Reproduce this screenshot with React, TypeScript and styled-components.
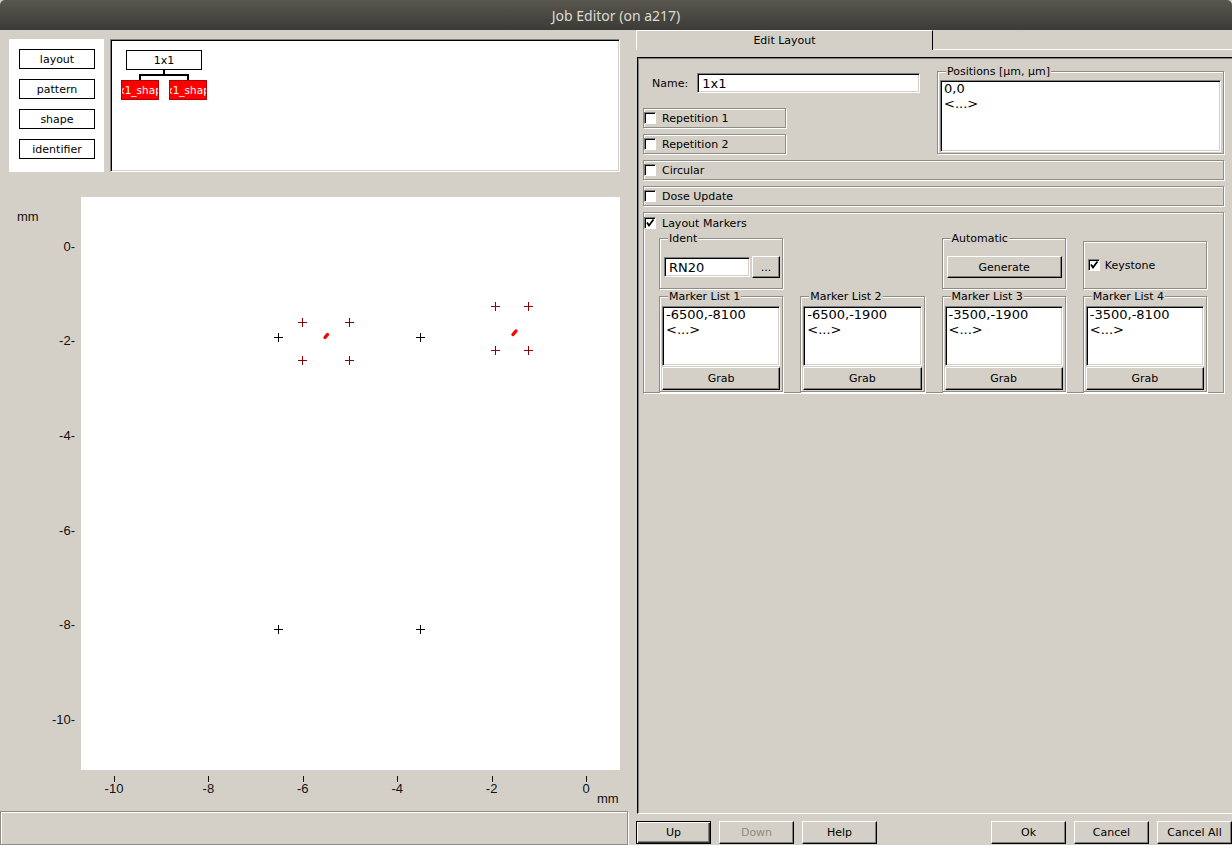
import React from "react";
import styled, { createGlobalStyle, css } from "styled-components";

const BG = "#d4d0c8";

const GlobalStyle = createGlobalStyle`
  html, body { margin: 0; padding: 0; background: ${BG}; }
  body {
    font-family: "DejaVu Sans", "Liberation Sans", sans-serif;
    font-size: 11px;
    color: #000;
    overflow: hidden;
  }
  * { box-sizing: border-box; }
`;

const etched = css`
  border: 1px solid #8f8c86;
  box-shadow: inset 1px 1px 0 #fff, 1px 1px 0 #fff;
`;

const sunken = css`
  border: 1px solid;
  border-color: #808080 #fff #fff #808080;
  box-shadow: inset 1px 1px 0 #000, inset -1px -1px 0 ${BG};
`;

const Window = styled.div`
  width: 1232px;
  height: 845px;
  display: flex;
  flex-direction: column;
  background: ${BG};
  overflow: hidden;
`;

const TitleBar = styled.div`
  flex: none;
  height: 30px;
  display: flex;
  align-items: center;
  justify-content: center;
  background: linear-gradient(#59564f, #3c3b37);
  border-radius: 5px 5px 0 0;
  color: #dfdbd2;
  font-family: "Noto Sans", "Open Sans", sans-serif;
  font-size: 14px;
`;

const Main = styled.div`
  flex: 1;
  min-height: 0;
  display: flex;
`;

/* ---------- left column ---------- */

const LeftCol = styled.div`
  flex: none;
  width: 636px;
  display: flex;
  flex-direction: column;
  padding-top: 9px;
`;

const TopRow = styled.div`
  display: flex;
  gap: 6px;
  height: 133px;
  padding-left: 9px;
`;

const ToolBox = styled.div`
  width: 95px;
  background: #fff;
  display: flex;
  flex-direction: column;
  gap: 10px;
  padding: 10px 0 0 10px;
`;

const ToolButton = styled.div`
  width: 76px;
  height: 20px;
  border: 1px solid #000;
  background: #fff;
  display: flex;
  align-items: center;
  justify-content: center;
`;

const TreePanel = styled.div`
  width: 510px;
  background: #fff;
  ${sunken};
  padding: 10px 0 0 10px;
`;

const TreeColumn = styled.div`
  display: inline-flex;
  flex-direction: column;
  align-items: center;
  width: 86px;
`;

const RootNode = styled.div`
  width: 76px;
  height: 20px;
  border: 1px solid #000;
  background: #fff;
  display: flex;
  align-items: center;
  justify-content: center;
`;

const ChildRow = styled.div`
  display: flex;
  gap: 10px;
`;

const ChildNode = styled.div`
  width: 38px;
  height: 20px;
  background: #ff0000;
  border: 1px solid #b00000;
  color: #fff;
  font-size: 10.5px;
  display: flex;
  align-items: center;
  justify-content: center;
  white-space: nowrap;
  overflow: hidden;
`;

const Chart = styled.div`
  margin-top: 25px;
  display: grid;
  grid-template-columns: 81px 539px;
  grid-template-rows: 573px 41px;
`;

const PlotArea = styled.div`
  background: #fff;
`;

const AxisText = styled.text`
  font-family: "Liberation Sans", Arial, sans-serif;
  font-size: 13px;
  fill: #111;
`;

const StatusBar = styled.div`
  width: 628px;
  height: 34px;
  ${etched};
`;

/* ---------- right column ---------- */

const RightCol = styled.div`
  flex: 1;
  min-width: 0;
  display: flex;
  flex-direction: column;
`;

const TabBar = styled.div`
  flex: none;
  height: 20px;
  display: flex;
`;

const Tab = styled.div`
  width: 297px;
  border-top: 1px solid #fff;
  border-left: 1px solid #fff;
  border-right: 1px solid #000;
  display: flex;
  align-items: center;
  justify-content: center;
`;

const TabFill = styled.div`
  flex: 1;
  border-bottom: 1px solid #fff;
`;

const Panel = styled.div`
  flex: 1;
  margin: 7px 0 0 1px;
  border-top: 1px solid #000;
  border-left: 1px solid #000;
  border-bottom: 1px solid #fff;
  box-shadow: inset 1px 1px 0 #808080;
  padding: 8px 8px 0 5px;
  display: flex;
  flex-direction: column;
`;

const TopSection = styled.div`
  display: grid;
  grid-template-columns: 294px 1fr;
  height: 88px;
`;

const LeftTop = styled.div`
  display: flex;
  flex-direction: column;
  padding-top: 7px;
`;

const NameRow = styled.div`
  display: flex;
  align-items: center;
  gap: 9px;
  height: 20px;
  padding-left: 9px;
`;

const TextInput = styled.div<{ $w: number }>`
  width: ${(p) => p.$w}px;
  height: 20px;
  background: #fff;
  ${sunken};
  padding: 0 4px;
  font-size: 13px;
  display: flex;
  align-items: center;
`;

const CheckBar = styled.div<{ $w?: number; $mt: number }>`
  width: ${(p) => (p.$w ? `${p.$w}px` : "auto")};
  height: 20px;
  margin-top: ${(p) => p.$mt}px;
  ${etched};
  display: flex;
  align-items: center;
  gap: 6px;
`;

const Group = styled.div<{ $h: number; $mt?: number }>`
  position: relative;
  height: ${(p) => p.$h}px;
  margin-top: ${(p) => p.$mt ?? 0}px;
  ${etched};
`;

const GroupTitle = styled.span`
  position: absolute;
  top: -7px;
  left: 8px;
  padding: 0 1px;
  line-height: 13px;
  background: ${BG};
  white-space: nowrap;
`;

const PositionsBody = styled.div`
  height: 100%;
  padding: 8px 2px 1px 2px;
  display: flex;
  flex-direction: column;
`;

const ListBox = styled.div<{ $h?: number }>`
  ${(p) => (p.$h ? `height: ${p.$h}px;` : "flex: 1;")}
  background: #fff;
  ${sunken};
  padding: 0 3px;
  font-size: 13px;
  line-height: 15px;
`;

const MarkersFrame = styled.div`
  margin-top: 6px;
  ${etched};
  padding-top: 4px;
`;

const FrameHeader = styled.div`
  display: flex;
  align-items: center;
  gap: 6px;
  height: 12px;
`;

const MarkerGrid = styled.div`
  display: grid;
  grid-template-columns: repeat(4, 1fr);
  column-gap: 17px;
  row-gap: 7px;
  margin: 9px 16px 0 15px;
  align-items: start;
`;

const GroupCell = styled(Group)<{ $col: number }>`
  grid-column: ${(p) => p.$col};
`;

const IdentBody = styled.div`
  padding: 17px 0 0 4px;
  display: flex;
  align-items: center;
  gap: 2px;
  height: 39px;
`;

const AutoBody = styled.div`
  padding: 17px 3px 0 4px;
`;

const KeystoneBox = styled.div`
  grid-column: 4;
  height: 48px;
  margin-top: 3px;
  ${etched};
  display: flex;
  align-items: center;
  gap: 5px;
  padding-left: 4px;
`;

const MarkerBody = styled.div`
  height: 100%;
  padding: 9px 2px 1px 2px;
  display: flex;
  flex-direction: column;
  gap: 1px;
`;

const Button = styled.div<{ $w?: number; $h: number; $default?: boolean; $disabled?: boolean }>`
  width: ${(p) => (p.$w ? `${p.$w}px` : "100%")};
  height: ${(p) => p.$h}px;
  flex: none;
  background: ${BG};
  display: flex;
  align-items: center;
  justify-content: center;
  color: ${(p) => (p.$disabled ? "#8e8b85" : "#000")};
  ${(p) =>
    p.$default
      ? css`
          border: 1px solid #000;
          box-shadow: inset 1px 1px 0 #fff, inset -1px -1px 0 #303030, inset -2px -2px 0 #808080;
        `
      : css`
          border: 1px solid;
          border-color: #fff #000 #000 #fff;
          box-shadow: inset -1px -1px 0 #808080;
        `}
`;

const ButtonRow = styled.div`
  flex: none;
  height: 23px;
  margin: 7px 0 1px 0;
  display: flex;
  gap: 8px;
`;

const Spacer = styled.div`
  flex: 1;
`;

const CheckBoxBox = styled.span`
  width: 12px;
  height: 12px;
  flex: none;
  background: #fff;
  border: 1px solid;
  border-color: #808080 #fff #fff #808080;
  box-shadow: inset 1px 1px 0 #000;
  display: inline-flex;
  align-items: center;
  justify-content: center;
`;

const CheckBox = ({ checked }: { checked?: boolean }) => (
  <CheckBoxBox>
    {checked && (
      <svg width="10" height="10" viewBox="0 0 10 10">
        <polyline points="2,4.5 4,7.5 8.5,1.5" fill="none" stroke="#000" strokeWidth="1.8" />
      </svg>
    )}
  </CheckBoxBox>
);

/* ---------- chart data ---------- */

const yTicks = [0, -2, -4, -6, -8, -10];
const xTicks = [-10, -8, -6, -4, -2, 0];
const xPx = (v: number) => 505 + 47.2 * v;
const yPx = (v: number) => 49 - 47.3 * v;

const blackCrosses: [number, number][] = [
  [197, 140],
  [339, 140],
  [197, 432],
  [339, 432],
];
const redCrosses: [number, number][] = [
  [221, 125],
  [268, 125],
  [221, 163],
  [268, 163],
  [414, 109],
  [447, 109],
  [414, 153],
  [447, 153],
];

const Cross = ({ x, y, color }: { x: number; y: number; color: string }) => (
  <g stroke={color} strokeWidth="1" shapeRendering="crispEdges">
    <line x1={x - 4} y1={y + 0.5} x2={x + 5} y2={y + 0.5} />
    <line x1={x + 0.5} y1={y - 4} x2={x + 0.5} y2={y + 5} />
  </g>
);

const markerLists = [
  { title: "Marker List 1", value: "-6500,-8100" },
  { title: "Marker List 2", value: "-6500,-1900" },
  { title: "Marker List 3", value: "-3500,-1900" },
  { title: "Marker List 4", value: "-3500,-8100" },
];

export default function App() {
  return (
    <Window>
      <GlobalStyle />
      <TitleBar>Job Editor (on a217)</TitleBar>
      <Main>
        <LeftCol>
          <TopRow>
            <ToolBox>
              <ToolButton>layout</ToolButton>
              <ToolButton>pattern</ToolButton>
              <ToolButton>shape</ToolButton>
              <ToolButton>identifier</ToolButton>
            </ToolBox>
            <TreePanel>
              <TreeColumn>
                <RootNode>1x1</RootNode>
                <svg width="86" height="10" viewBox="0 0 86 10">
                  <g stroke="#000" strokeWidth="2" fill="none">
                    <line x1="43" y1="0" x2="43" y2="5" />
                    <polyline points="19,10 19,5 67,5 67,10" />
                  </g>
                </svg>
                <ChildRow>
                  <ChildNode>1x1_shape</ChildNode>
                  <ChildNode>1x1_shape</ChildNode>
                </ChildRow>
              </TreeColumn>
            </TreePanel>
          </TopRow>
          <Chart>
            <svg width="81" height="573">
              <AxisText x="17" y="24">mm</AxisText>
              {yTicks.map((v) => (
                <AxisText key={v} x="75" y={yPx(v) + 4.7} textAnchor="end">
                  {`${v}-`}
                </AxisText>
              ))}
            </svg>
            <PlotArea>
              <svg width="539" height="573">
                {blackCrosses.map(([x, y], i) => (
                  <Cross key={`b${i}`} x={x} y={y} color="#000" />
                ))}
                {redCrosses.map(([x, y], i) => (
                  <Cross key={`r${i}`} x={x} y={y} color="#8b0000" />
                ))}
                <line x1="244" y1="140.5" x2="246.5" y2="137.5" stroke="#ff0000" strokeWidth="3.4" strokeLinecap="round" />
                <line x1="432" y1="137.5" x2="435" y2="134" stroke="#ff0000" strokeWidth="3.4" strokeLinecap="round" />
              </svg>
            </PlotArea>
            <div />
            <svg width="539" height="41">
              {xTicks.map((v) => (
                <g key={v}>
                  <line
                    x1={Math.round(xPx(v)) + 0.5}
                    y1="6"
                    x2={Math.round(xPx(v)) + 0.5}
                    y2="12"
                    stroke="#111"
                    strokeWidth="1"
                  />
                  <AxisText x={xPx(v)} y="22.7" textAnchor="middle">
                    {v}
                  </AxisText>
                </g>
              ))}
              <AxisText x="516" y="32.5">mm</AxisText>
            </svg>
          </Chart>
          <StatusBar />
        </LeftCol>

        <RightCol>
          <TabBar>
            <Tab>Edit Layout</Tab>
            <TabFill />
          </TabBar>
          <Panel>
            <TopSection>
              <LeftTop>
                <NameRow>
                  <span>Name:</span>
                  <TextInput $w={223}>1x1</TextInput>
                </NameRow>
                <CheckBar $w={143} $mt={15}>
                  <CheckBox />
                  Repetition 1
                </CheckBar>
                <CheckBar $w={143} $mt={6}>
                  <CheckBox />
                  Repetition 2
                </CheckBar>
              </LeftTop>
              <Group $h={83} $mt={5}>
                <GroupTitle>Positions [µm, µm]</GroupTitle>
                <PositionsBody>
                  <ListBox>
                    <div>0,0</div>
                    <div>&lt;...&gt;</div>
                  </ListBox>
                </PositionsBody>
              </Group>
            </TopSection>
            <CheckBar $mt={6}>
              <CheckBox />
              Circular
            </CheckBar>
            <CheckBar $mt={6}>
              <CheckBox />
              Dose Update
            </CheckBar>
            <MarkersFrame>
              <FrameHeader>
                <CheckBox checked />
                Layout Markers
              </FrameHeader>
              <MarkerGrid>
                <GroupCell $col={1} $h={51}>
                  <GroupTitle>Ident</GroupTitle>
                  <IdentBody>
                    <TextInput $w={86}>RN20</TextInput>
                    <Button $w={28} $h={22}>...</Button>
                  </IdentBody>
                </GroupCell>
                <GroupCell $col={3} $h={51}>
                  <GroupTitle>Automatic</GroupTitle>
                  <AutoBody>
                    <Button $h={22}>Generate</Button>
                  </AutoBody>
                </GroupCell>
                <KeystoneBox>
                  <CheckBox checked />
                  Keystone
                </KeystoneBox>
                {markerLists.map((m, i) => (
                  <GroupCell key={m.title} $col={i + 1} $h={96}>
                    <GroupTitle>{m.title}</GroupTitle>
                    <MarkerBody>
                      <ListBox $h={60}>
                        <div>{m.value}</div>
                        <div>&lt;...&gt;</div>
                      </ListBox>
                      <Button $h={23}>Grab</Button>
                    </MarkerBody>
                  </GroupCell>
                ))}
              </MarkerGrid>
            </MarkersFrame>
          </Panel>
          <ButtonRow>
            <Button $w={75} $h={23} $default>
              Up
            </Button>
            <Button $w={75} $h={23} $disabled>
              Down
            </Button>
            <Button $w={75} $h={23}>
              Help
            </Button>
            <Spacer />
            <Button $w={75} $h={23}>
              Ok
            </Button>
            <Button $w={75} $h={23}>
              Cancel
            </Button>
            <Button $w={75} $h={23}>
              Cancel All
            </Button>
          </ButtonRow>
        </RightCol>
      </Main>
    </Window>
  );
}
